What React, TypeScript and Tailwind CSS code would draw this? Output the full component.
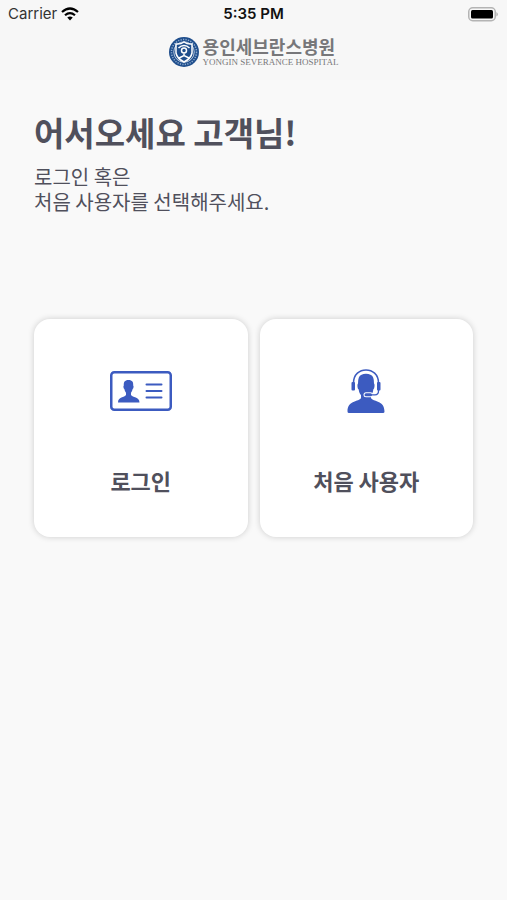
import React from 'react';

const Emblem: React.FC = () => (
  <svg viewBox="0 0 60 60" className="w-[30px] h-[30px]" aria-hidden="true">
    <circle cx="30" cy="30" r="30" fill="#1f4e8c" />
    <circle cx="30" cy="30" r="25" fill="none" stroke="#8fabcf" strokeWidth="3" strokeDasharray="2.5 2.5" />
    <circle cx="30" cy="30" r="20.5" fill="#1f4e8c" stroke="#e8eff7" strokeWidth="1.5" />
    <path d="M30 10 Q37 15 46 14 V32 Q44 43 30 50 Q16 43 14 32 V14 Q23 15 30 10Z" fill="#1f4e8c" stroke="#fff" strokeWidth="3" />
    <circle cx="30" cy="27" r="5" fill="none" stroke="#fff" strokeWidth="3" />
    <path d="M19 22 Q24 17 30 17 Q36 17 41 22 M30 33 V38 M20 42 L30 37 L40 42" fill="none" stroke="#fff" strokeWidth="3" />
  </svg>
);

const WifiIcon: React.FC = () => (
  <svg viewBox="0 0 36 28" className="w-[18px] h-[14px]" fill="none" stroke="#000" strokeWidth="4.5" aria-hidden="true">
    <path d="M2 10 Q18 -4 34 10" />
    <path d="M8 16.5 Q18 8 28 16.5" />
    <path d="M12.5 21 Q18 16.5 23.5 21 L18 27Z" fill="#000" stroke="none" />
  </svg>
);

const BatteryIcon: React.FC = () => (
  <svg viewBox="0 0 62 30" className="w-[31px] h-[15px]" aria-hidden="true">
    <rect x="1.5" y="1.5" width="53" height="26" rx="8" fill="#f7f7f7" stroke="#b4b4b4" strokeWidth="3" />
    <rect x="6" y="6" width="44" height="17" rx="3" fill="#000" />
    <path d="M57 10 Q62 14.5 57 19Z" fill="#a0a0a0" />
  </svg>
);

const IdCardIcon: React.FC = () => (
  <svg viewBox="0 0 62 40" className="w-[62px] h-10" aria-hidden="true">
    <rect x="1.25" y="1.25" width="59.5" height="37.5" rx="3" fill="none" stroke="#3c5bc0" strokeWidth="2.5" />
    <path d="M18.5 9 C14.5 9 13.6 11.3 13.8 14.5 C13 15 13.5 17.7 14.4 18 C14.7 20 15.4 21 16 21.7 V24 C14.5 26.5 8 25.5 8 31.5 H29.5 C29.5 25.5 22.5 26.5 21 24 V21.7 C21.6 21 22.3 20 22.6 18 C23.5 17.7 24 15 23.2 14.5 C23.4 11.3 22.5 9 18.5 9Z" fill="#3c5bc0" />
    <path d="M36.5 13.5H51.5M36.5 20H51.5M36.5 26.5H51.5" stroke="#3c5bc0" strokeWidth="2" strokeLinecap="round" />
  </svg>
);

const HeadsetIcon: React.FC = () => (
  <svg viewBox="0 0 38 46" className="w-[38px] h-[46px]" aria-hidden="true">
    <path d="M14 7 Q19 4.5 24 7 Q27 8 27 15.5 C28 16 27.6 21 26.3 21.5 C26 24.5 25 26 24 27 V30 C26 34 37.5 32 37.5 43.5 Q37.5 45 36 45 H2 Q0.5 45 0.5 43.5 C0.5 32 12 34 14 30 V27 C13 26 12 24.5 11.7 21.5 C10.4 21 10 16 11 15.5 Q11 8 14 7Z" fill="#3c5bc0" />
    <path d="M6.5 15 C6.5 -2.5 31.5 -2.5 31.5 15" fill="none" stroke="#3c5bc0" strokeWidth="1.5" />
    <rect x="16.5" y="24.3" width="9.5" height="5" rx="2.5" fill="#fff" />
    <path d="M31.5 21 V23 Q31.5 26.8 28 26.8 H24" fill="none" stroke="#3c5bc0" strokeWidth="1.3" />
    <rect x="17.5" y="25.3" width="7.5" height="3" rx="1.5" fill="#3c5bc0" />
    <rect x="4.5" y="14" width="3.5" height="8.5" rx="1" fill="#3c5bc0" />
    <rect x="30" y="14" width="3.5" height="8.5" rx="1" fill="#3c5bc0" />
  </svg>
);

interface ChoiceCardProps {
  icon: React.ReactNode;
  label: string;
}

const ChoiceCard: React.FC<ChoiceCardProps> = ({ icon, label }) => (
  <button
    type="button"
    className="flex flex-col items-center bg-white rounded-2xl pt-12 pb-10 shadow-[0_0_6px_rgba(0,0,0,0.18)]"
  >
    <span className="flex items-center justify-center h-12">{icon}</span>
    <span className="mt-12 text-[22px] leading-[34px] font-bold">{label}</span>
  </button>
);

const App: React.FC = () => {
  return (
    <div className="min-h-screen bg-[#f9f9f9] text-[#50505c] font-['Noto_Sans_CJK_KR',sans-serif]">
      <header className="h-20 bg-[#f7f7f7]">
        {/* Status bar */}
        <div className="grid grid-cols-3 items-center h-7 px-2 font-['Inter','Noto_Sans_CJK_KR',sans-serif] text-[15px] text-[#111111]">
          <div className="flex items-center gap-1 text-[#333333]">
            <span>Carrier</span>
            <WifiIcon />
          </div>
          <span className="text-center font-semibold">5:35 PM</span>
          <div className="flex justify-end">
            <BatteryIcon />
          </div>
        </div>

        <div className="flex items-center justify-center gap-1 pt-2">
          <Emblem />
          <div className="flex flex-col text-[#77777a]">
            <span className="text-[18px] leading-5 font-bold">용인세브란스병원</span>
            <span className="font-['Liberation_Serif',serif] text-[9px] leading-3">YONGIN SEVERANCE HOSPITAL</span>
          </div>
        </div>
      </header>

      <main className="px-[34px] pt-7">
        <h1 className="text-[33px] leading-12 font-bold">어서오세요 고객님!</h1>
        <p className="mt-2 text-[20px] leading-[25px]">
          로그인 혹은
          <br />
          처음 사용자를 선택해주세요.
        </p>

        <div className="grid grid-cols-2 gap-3 mt-[105px]">
          <ChoiceCard icon={<IdCardIcon />} label="로그인" />
          <ChoiceCard icon={<HeadsetIcon />} label="처음 사용자" />
        </div>
      </main>
    </div>
  );
};

export default App;
